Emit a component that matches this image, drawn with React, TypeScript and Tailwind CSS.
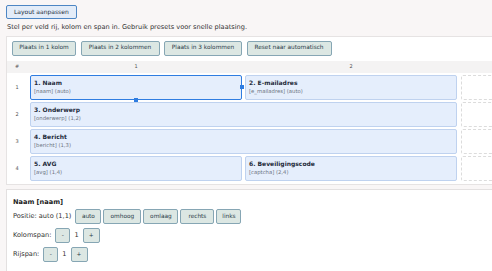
import React from "react";

const font = { fontFamily: '"DejaVu Sans", Verdana, sans-serif' };

const PRESETS = [
  { label: "Plaats in 1 kolom", w: "w-[64px]" },
  { label: "Plaats in 2 kolommen", w: "w-[79px]" },
  { label: "Plaats in 3 kolommen", w: "w-[78px]" },
  { label: "Reset naar automatisch", w: "w-[85px]" },
];

type Cell = { title: string; sub: string; col: number; span: number; selected?: boolean };

const ROWS: Cell[][] = [
  [
    { title: "1. Naam", sub: "[naam] (auto)", col: 1, span: 1, selected: true },
    { title: "2. E-mailadres", sub: "[e_mailadres] (auto)", col: 2, span: 1 },
  ],
  [{ title: "3. Onderwerp", sub: "[onderwerp] (1,2)", col: 1, span: 2 }],
  [{ title: "4. Bericht", sub: "[bericht] (1,3)", col: 1, span: 2 }],
  [
    { title: "5. AVG", sub: "[avg] (1,4)", col: 1, span: 1 },
    { title: "6. Beveiligingscode", sub: "[captcha] (2,4)", col: 2, span: 1 },
  ],
];

// button styling shared by presets and the position editor
function Btn({ children, className = "" }: { children: React.ReactNode; className?: string }) {
  return (
    <button
      className={`h-[15px] bg-[#dce7e3] border border-[#86a6b4] rounded-[2px] text-[5.8px] text-[#2b3b48] leading-none ${className}`}
    >
      {children}
    </button>
  );
}

function FieldCell({ cell }: { cell: Cell }) {
  return (
    <div
      className={`relative h-[25px] rounded-[2px] bg-[#e5eefc] px-[3px] flex flex-col justify-center gap-[3px] ${
        cell.selected ? "border-[1.5px] border-[#2f7de1]" : "border border-[#bfd2ef]"
      }`}
      style={{ gridColumn: `${cell.col + 1} / span ${cell.span}` }}
    >
      <div className="text-[6px] font-bold text-[#1e2b3a] leading-none">{cell.title}</div>
      <div className="text-[5.3px] text-[#6b7280] leading-none">{cell.sub}</div>
      {cell.selected && (
        <>
          <span className="absolute right-[-3px] top-1/2 -translate-y-1/2 w-[4px] h-[4px] bg-[#2f7de1]" />
          <span className="absolute bottom-[-3px] left-1/2 -translate-x-1/2 w-[4px] h-[4px] bg-[#2f7de1]" />
        </>
      )}
    </div>
  );
}

export default function App() {
  return (
    <div className="w-[492px] h-[271px] overflow-hidden bg-[#f9f6f6] text-[#222] leading-none" style={font}>
      <div className="pl-[6px] pt-[5px] flex flex-col items-start">
        <button className="h-[14px] px-[7px] bg-[#e3ecf8] border border-[#4d86c4] rounded-[2px] text-[6px] text-[#1f2d3d] leading-none">
          Layout aanpassen
        </button>
        <p className="mt-[5px] text-[6.6px] text-[#333] leading-none pl-[1px]">
          Stel per veld rij, kolom en span in. Gebruik presets voor snelle plaatsing.
        </p>

        <div className="mt-[5px] w-[700px] bg-white border border-[#e6e3e3] pb-[3px]">
          <div className="flex gap-[4.5px] px-[5px] pt-[4px]">
            {PRESETS.map(p => (
              <Btn key={p.label} className={p.w}>{p.label}</Btn>
            ))}
          </div>

          <div className="mt-[5px] grid grid-cols-[20px_212px_212px_212px] gap-x-[3px] gap-y-[2px]">
            <div className="col-span-4 grid grid-cols-[20px_212px_212px_212px] gap-x-[3px] h-[12px] bg-[#f4f3f3] items-center text-[5px] text-[#555]">
              <span className="text-center">#</span>
              <span className="text-center">1</span>
              <span className="text-center">2</span>
              <span />
            </div>
            {ROWS.map((row, i) => (
              <React.Fragment key={i}>
                <div className="h-[25px] flex items-center justify-center text-[5px] text-[#555]" style={{ gridColumn: 1 }}>
                  {i + 1}
                </div>
                {row.map(c => (
                  <FieldCell key={c.title} cell={c} />
                ))}
                <div className="h-[25px] border border-dashed border-[#dcdcdc] rounded-[2px] ml-[1px]" style={{ gridColumn: 4 }} />
              </React.Fragment>
            ))}
          </div>
        </div>

        <div className="mt-[4px] w-[700px] h-[83px] bg-white border border-[#e3e0e0] pl-[6px] pt-[9px]">
          <div className="text-[6.6px] font-bold text-[#222] leading-none">Naam [naam]</div>
          <div className="mt-[4px] flex items-center gap-[2px] text-[6.6px] text-[#333]">
            <span className="mr-[2px]">Positie: auto (1,1)</span>
            <Btn className="w-[26px]">auto</Btn>
            <Btn className="w-[38px]">omhoog</Btn>
            <Btn className="w-[35px]">omlaag</Btn>
            <Btn className="w-[34px]">rechts</Btn>
            <Btn className="w-[25px]">links</Btn>
          </div>
          <div className="mt-[4px] flex items-center gap-[4px] text-[6.6px] text-[#333]">
            <span>Kolomspan:</span>
            <Btn className="w-[15px]">-</Btn>
            <span>1</span>
            <Btn className="w-[17px]">+</Btn>
          </div>
          <div className="mt-[4px] flex items-center gap-[4px] text-[6.6px] text-[#333]">
            <span>Rijspan:</span>
            <Btn className="w-[15px]">-</Btn>
            <span>1</span>
            <Btn className="w-[17px]">+</Btn>
          </div>
        </div>
      </div>
    </div>
  );
}
